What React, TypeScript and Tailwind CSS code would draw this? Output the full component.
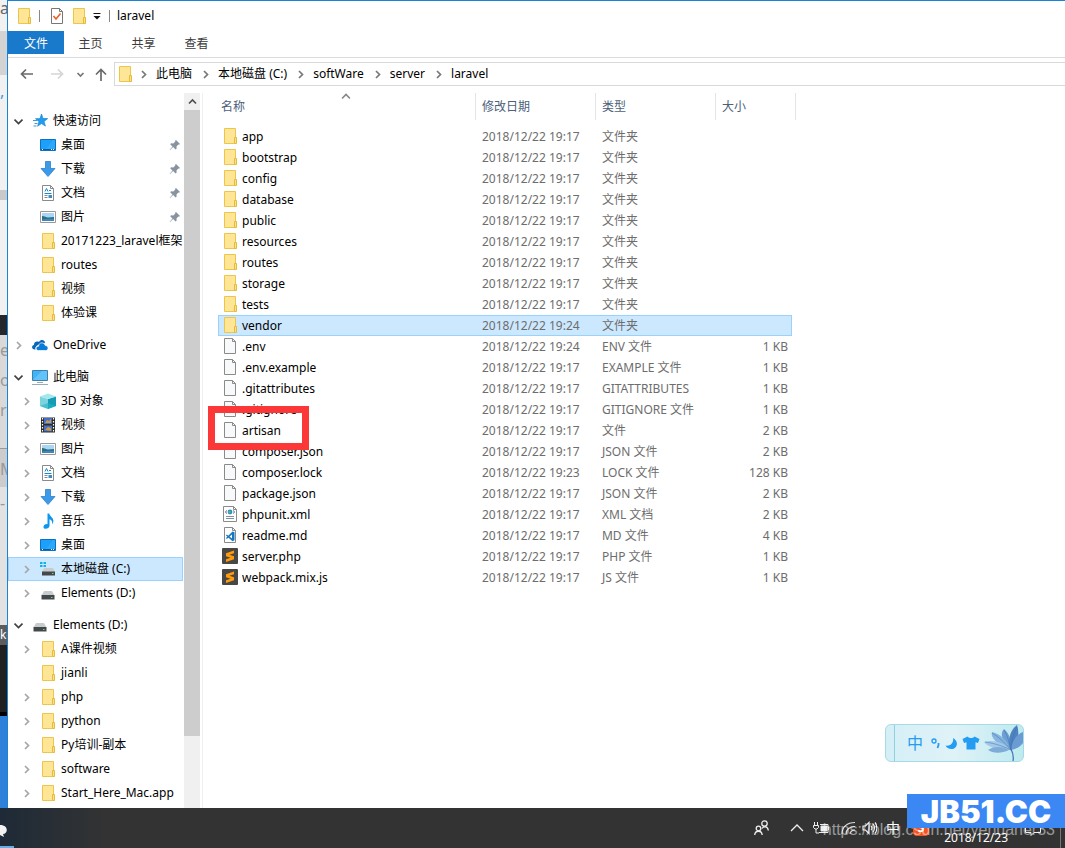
import type { ReactNode } from "react";
import { clsx } from "clsx";

type IconName =
  | "folder"
  | "star"
  | "desktop"
  | "download"
  | "document"
  | "picture"
  | "cloud"
  | "computer"
  | "cube"
  | "video"
  | "music"
  | "system"
  | "drive"
  | "file"
  | "xml"
  | "vscode"
  | "sublime";

type TreeItem = {
  label: string;
  icon: IconName;
  root?: boolean;
  open?: boolean;
  arrow?: boolean;
  pinned?: boolean;
  selected?: boolean;
};

const TREE: TreeItem[][] = [
  [
    { label: "快速访问", icon: "star", root: true, open: true, arrow: true },
    { label: "桌面", icon: "desktop", pinned: true },
    { label: "下载", icon: "download", pinned: true },
    { label: "文档", icon: "document", pinned: true },
    { label: "图片", icon: "picture", pinned: true },
    { label: "20171223_laravel框架", icon: "folder" },
    { label: "routes", icon: "folder" },
    { label: "视频", icon: "folder" },
    { label: "体验课", icon: "folder" },
  ],
  [{ label: "OneDrive", icon: "cloud", root: true, arrow: true }],
  [
    { label: "此电脑", icon: "computer", root: true, open: true, arrow: true },
    { label: "3D 对象", icon: "cube", arrow: true },
    { label: "视频", icon: "video", arrow: true },
    { label: "图片", icon: "picture", arrow: true },
    { label: "文档", icon: "document", arrow: true },
    { label: "下载", icon: "download", arrow: true },
    { label: "音乐", icon: "music", arrow: true },
    { label: "桌面", icon: "desktop", arrow: true },
    { label: "本地磁盘 (C:)", icon: "system", arrow: true, selected: true },
    { label: "Elements (D:)", icon: "drive", arrow: true },
  ],
  [
    { label: "Elements (D:)", icon: "drive", root: true, open: true, arrow: true },
    { label: "A课件视频", icon: "folder", arrow: true },
    { label: "jianli", icon: "folder" },
    { label: "php", icon: "folder", arrow: true },
    { label: "python", icon: "folder", arrow: true },
    { label: "Py培训-副本", icon: "folder", arrow: true },
    { label: "software", icon: "folder", arrow: true },
    { label: "Start_Here_Mac.app", icon: "folder", arrow: true },
  ],
];

type FileRow = { name: string; date?: string; type?: string; size?: string; icon?: IconName };

const FILES: FileRow[] = [
  { name: "app" },
  { name: "bootstrap" },
  { name: "config" },
  { name: "database" },
  { name: "public" },
  { name: "resources" },
  { name: "routes" },
  { name: "storage" },
  { name: "tests" },
  { name: "vendor", date: "2018/12/22 19:24" },
  { name: ".env", date: "2018/12/22 19:24", type: "ENV 文件", size: "1 KB", icon: "file" },
  { name: ".env.example", type: "EXAMPLE 文件", size: "1 KB", icon: "file" },
  { name: ".gitattributes", type: "GITATTRIBUTES", size: "1 KB", icon: "file" },
  { name: ".gitignore", type: "GITIGNORE 文件", size: "1 KB", icon: "file" },
  { name: "artisan", type: "文件", size: "2 KB", icon: "file" },
  { name: "composer.json", type: "JSON 文件", size: "2 KB", icon: "file" },
  { name: "composer.lock", date: "2018/12/22 19:23", type: "LOCK 文件", size: "128 KB", icon: "file" },
  { name: "package.json", type: "JSON 文件", size: "2 KB", icon: "file" },
  { name: "phpunit.xml", type: "XML 文档", size: "2 KB", icon: "xml" },
  { name: "readme.md", type: "MD 文件", size: "4 KB", icon: "vscode" },
  { name: "server.php", type: "PHP 文件", size: "1 KB", icon: "sublime" },
  { name: "webpack.mix.js", type: "JS 文件", size: "1 KB", icon: "sublime" },
];

const CRUMBS = ["此电脑", "本地磁盘 (C:)", "softWare", "server", "laravel"];

const MENU = ["主页", "共享", "查看"];

const PAGE = "M2.5.5h8l3 3v12h-11z";

const ICONS: Record<IconName, ReactNode> = {
  folder: (
    <>
      <path d="M2.5.5h11v15h-11z" fill="#ffe596" stroke="#ecc64a" />
      <path d="M12.5 9.5h2v6h-2z" fill="#ffe08a" stroke="#e5bb3c" />
    </>
  ),
  star: (
    <>
      <path d="M9.500 1l1.500 4.500 4.700.1-3.700 2.900 1.400 4.600-3.900-2.600-3.900 2.700 1.400-4.600L3.500 5.700l4.500-.1z" fill="#1e9df0" stroke="#1b86d2" strokeWidth=".7" />
      <path d="M1 7.500h4M2.500 10.500h3M1.500 13h3" stroke="#2b8dcc" strokeWidth=".9" />
    </>
  ),
  desktop: (
    <>
      <path d="M.5 2.500h15v11H.5z" fill="#1ba1fb" stroke="#0f6fc0" />
      <path d="M1 12.500h14" stroke="#0b5b9e" />
      <path d="M2 12.500h1M11 12.500h1M13 12.500h1" stroke="#fff" />
      <path d="M6 12L13 3h2v9z" fill="#38aefc" opacity=".6" />
    </>
  ),
  download: <path d="M5.500.5h5v7h4.500L8 15.500 1 7.500h4.500z" fill="#3c9ae8" stroke="#2a7fcb" strokeWidth=".8" />,
  document: (
    <>
      <path d={PAGE} fill="#fff" stroke="#8a8a8a" />
      <path d="M10.500.5v3h3" fill="none" stroke="#8a8a8a" />
      <path d="M5 6.500l1.500-3L8 6.500M9 5.500h2M4.500 8.500h7" stroke="#1a86d0" fill="none" />
      <path d="M4.500 10.500h3M4.500 12.500h3" stroke="#7d8b99" />
      <path d="M8.500 10h3.500v3H8.500z" fill="#3f8dbd" />
    </>
  ),
  picture: (
    <>
      <path d="M.5 2.500h15v11H.5z" fill="#fff" stroke="#9a9a9a" />
      <path d="M2 4h12v8H2z" fill="#a9d7f3" />
      <path d="M2 7c3 0 4 1.500 6 1.500s4-.5 6-.5v4H2z" fill="#2f6f80" />
      <path d="M2 10.500c4-1 8-1 12-.5v2H2z" fill="#3f86c0" />
    </>
  ),
  cloud: (
    <>
      <path d="M3.500 12.500C-.8 13-.8 8.500 2 8 2 4.500 5 4 7 5c2-3.500 6-2 6 1L6 8c-2 1-3 2.500-2.500 4.500z" fill="#0a64b8" />
      <path d="M6.500 13.500c-3.200 0-3.200-4.300 0-4.300.2-4.300 6-4.300 6.800-.7 3.700 0 3.500 5 .4 5z" fill="#0b7bd8" stroke="#fff" strokeWidth=".7" />
    </>
  ),
  computer: (
    <>
      <path d="M.5 1.500h15v10H.5z" fill="#3fb4f8" stroke="#3f7fa8" />
      <path d="M1 11L10 2h5v9z" fill="#7bcdfa" opacity=".6" />
      <path d="M5 13.500h6M0 15.500h16" stroke="#9aaab8" />
    </>
  ),
  cube: (
    <>
      <path d="M0 3.500L8 6v10l-8-3z" fill="#7ad3dd" />
      <path d="M16 3.500L8 6v10l8-3z" fill="#149cb5" />
      <path d="M0 3.500L8 .5l8 3L8 6z" fill="#a6e7ee" />
      <path d="M0 13l8-3 8 3-8 3z" fill="#1fb4c8" opacity=".6" />
    </>
  ),
  video: (
    <>
      <path d="M1 .5h14v15H1z" fill="#2c2c2c" />
      <path d="M4 1h8v6H4z" fill="#4270cc" />
      <path d="M4 8.500h8v6H4z" fill="#4270cc" />
      <path d="M5 6l2-3 2 1 2-2v4zM5 13l3-3 3 1v3z" fill="#d59a2f" />
      <path d="M2.500 1v14M13.500 1v14" stroke="#fff" strokeWidth="1.200" strokeDasharray="1.500 1.500" />
    </>
  ),
  music: (
    <path d="M7.500.5h1.800c.2 3 4.700 4 4 8.200-.2 1.300-1 2.300-1.300 2.500.8-3-.7-4.400-2.500-5v6.500c0 3-5.500 4.200-6 1.500-.3-2.200 2.400-3.500 4-3z" fill="#0e95ef" />
  ),
  system: (
    <>
      <path d="M0 1h2.500v2H0zM3.500 1H6v2H3.500zM0 4h2.500v2H0zM3.500 4H6v2H3.500z" fill="#14b1e8" />
      <path d="M4 7h9l2 4H2z" fill="#c9ccce" />
      <path d="M2 10.500h13v4H2z" fill="#45484b" />
      <path d="M12 12.500h1.500" stroke="#55e06b" />
    </>
  ),
  drive: (
    <>
      <path d="M4 6h8l2.500 4.500h-13z" fill="#c9ccce" />
      <path d="M1.500 10h13v4.500h-13z" fill="#45484b" />
      <path d="M11 12.500h1.500" stroke="#55e06b" />
    </>
  ),
  file: (
    <>
      <path d={PAGE} fill="#f8f9fa" stroke="#8a8a8a" />
      <path d="M10.500.5v3h3" fill="none" stroke="#8a8a8a" />
    </>
  ),
  xml: (
    <>
      <path d="M1.500.5h10l3 3v12h-13z" fill="#fff" stroke="#8a8a8a" />
      <path d="M11.500.5v3h3" fill="none" stroke="#8a8a8a" />
      <circle cx="8" cy="6" r="2.400" fill="#2f8fc4" />
      <circle cx="7.500" cy="6" r="1" fill="#74c05c" />
      <path d="M5 4.500L3.300 6 5 7.500M11 4.500L12.700 6 11 7.500" fill="none" stroke="#3a4f8f" strokeWidth=".9" />
      <path d="M4 10.500h8M4 12.500h8" stroke="#7f8fa8" />
    </>
  ),
  vscode: (
    <>
      <path d={PAGE} fill="#fff" stroke="#8a8a8a" />
      <path d="M10.500.5v3h3" fill="none" stroke="#8a8a8a" />
      <path d="M10.500 4.500l2 .8v8l-2 .9L4 8.500l.8-1 5.200 4V7.500L4.800 12 4 11z" fill="#1178c8" />
    </>
  ),
  sublime: (
    <>
      <rect width="16" height="16" rx="1" fill="#474747" />
      <path d="M12 2.500v2.800L7.500 6.800 12 8.200v3L4 14v-2.800l4.500-1.500L4 8.200v-3z" fill="#ff9a0a" />
    </>
  ),
};

function Icon({ name }: { name: IconName }) {
  return (
    <svg width="16" height="16" viewBox="0 0 16 16" className="shrink-0" aria-hidden>
      {ICONS[name]}
    </svg>
  );
}

function Chevron({ className, d = "M3 1l3.500 3.500L3 8" }: { className?: string; d?: string }) {
  return (
    <svg width="9" height="9" viewBox="0 0 9 9" fill="none" className={clsx("shrink-0", className)} aria-hidden>
      <path d={d} stroke="currentColor" strokeWidth="1.700" />
    </svg>
  );
}

function PinIcon() {
  return (
    <svg width="12" height="12" viewBox="0 0 12 12" className="shrink-0" aria-hidden>
      <path d="M7 1l4 4-1 .8-.7-.2-1.800 2 .1 2.200-1 .8-2.500-2.500L1 11l-.3-.3L3.500 7.500 1.200 5.200l.9-.9 2.200.1 2-1.800-.2-.8z" fill="#87949f" />
    </svg>
  );
}

function BackIcon() {
  return (
    <svg width="14" height="12" viewBox="0 0 14 12" fill="none" aria-hidden>
      <path d="M13 6H2M6 1.500L1.500 6 6 10.500" stroke="currentColor" strokeWidth="1.700" />
    </svg>
  );
}

function ForwardIcon() {
  return (
    <svg width="14" height="12" viewBox="0 0 14 12" fill="none" aria-hidden>
      <path d="M1 6h11M8 1.500L12.500 6 8 10.500" stroke="currentColor" strokeWidth="1.700" />
    </svg>
  );
}

function UpIcon() {
  return (
    <svg width="12" height="13" viewBox="0 0 12 13" fill="none" aria-hidden>
      <path d="M6 13V2M1 6.500l5-5 5 5" stroke="currentColor" strokeWidth="1.700" />
    </svg>
  );
}

function TitleBar() {
  return (
    <div className="flex h-[30px] shrink-0 items-center pl-2">
      <Icon name="folder" />
      <span className="ml-[7px] h-3 w-px bg-[#888]" />
      <button className="ml-[9px]" aria-label="属性">
        <svg width="16" height="16" viewBox="0 0 16 16" fill="none" aria-hidden>
          <path d={PAGE} fill="#fff" stroke="#777" />
          <path d="M10.500.5v3h3" stroke="#777" />
          <path d="M4.500 8l2.500 3 4.500-5.500" stroke="#e8622c" strokeWidth="1.600" />
        </svg>
      </button>
      <button className="ml-[6px]" aria-label="新建文件夹">
        <Icon name="folder" />
      </button>
      <button className="ml-[6px]" aria-label="自定义快速访问工具栏">
        <svg width="8" height="8" viewBox="0 0 8 8" aria-hidden>
          <path d="M.5 1h7v1h-7zM.5 4h7L4 7.500z" fill="#111" />
        </svg>
      </button>
      <span className="ml-2 h-3 w-px bg-[#888]" />
      <h1 className="ml-[7px]">laravel</h1>
    </div>
  );
}

function AddressBar() {
  return (
    <div className="mb-[3px] flex h-8 shrink-0 items-center pl-3">
      <button className="text-[#6a6a6a]" aria-label="返回"><BackIcon /></button>
      <button className="ml-4 text-[#d5d5d5]" aria-label="前进"><ForwardIcon /></button>
      <button className="ml-3 text-[#777]" aria-label="最近浏览的位置">
        <Chevron d="M1.500 3l3 3 3-3" />
      </button>
      <button className="ml-[10px] text-[#6a6a6a]" aria-label="上移"><UpIcon /></button>
      <nav className="ml-[7px] flex h-6 flex-1 items-center border border-r-0 border-[#d9d9d9] pl-[2px]">
        <Icon name="folder" />
        {CRUMBS.map((crumb) => (
          <span key={crumb} className="flex items-center">
            <Chevron className="ml-[6px] mr-2 text-[#777]" />
            <a href="#" className="mr-[3px]">{crumb}</a>
          </span>
        ))}
      </nav>
    </div>
  );
}

function TreeRow({ item }: { item: TreeItem }) {
  return (
    <li
      className={clsx(
        "flex h-6 items-center border",
        item.root ? "pl-px" : "pl-[9px]",
        item.selected ? "border-[#99d1ff] bg-[#cce8ff]" : "border-transparent"
      )}
    >
      <span className="flex w-4 shrink-0 justify-center">
        {item.arrow && (
          <Chevron
            className={item.open ? "text-[#404040]" : "text-[#a6a6a6]"}
            d={item.open ? "M.5 2.500l4 4 4-4" : undefined}
          />
        )}
      </span>
      <span className="ml-[6px] mr-[5px]"><Icon name={item.icon} /></span>
      <span className="flex-1 whitespace-nowrap">{item.label}</span>
      {item.pinned && <span className="mr-px"><PinIcon /></span>}
    </li>
  );
}

function Sidebar() {
  return (
    <aside className="flex shrink-0 border-r border-[#f0f0f0] pr-[2px]">
      <div className="w-[176px] space-y-2 overflow-hidden pr-px pt-4">
        {TREE.map((group) => (
          <ul key={group[0].label}>
            {group.map((item) => (
              <TreeRow key={item.label} item={item} />
            ))}
          </ul>
        ))}
      </div>
      <div className="flex w-4 flex-col bg-[#f0f0f0]">
        <button className="flex h-[17px] items-center justify-center text-[#505050]" aria-label="向上滚动">
          <Chevron d="M1 6.500L4.500 3 8 6.500" />
        </button>
        <div className="h-7/8 bg-[#cdcdcd]" />
      </div>
    </aside>
  );
}

function FileList() {
  const heading = "h-[33px] p-0 align-top text-left font-normal text-[#4c607a]";
  const cell = "h-[27px] border-r border-[#e5e5e5] flex items-center";
  return (
    <main className="relative min-w-0 flex-1 overflow-hidden pl-[15px]">
      <table className="w-[578px] table-fixed border-separate border-spacing-0">
        <colgroup>
          <col />
          <col className="w-[120px]" />
          <col className="w-[120px]" />
          <col className="w-[76px]" />
          <col className="w-1" />
        </colgroup>
        <thead>
          <tr>
            <th className={heading}>
              <div className={clsx(cell, "relative pl-[3px]")}>
                名称
                <Chevron className="absolute left-1/2 top-0 -translate-x-1/2 text-[#888]" d="M.5 5.500l4-4 4 4" />
              </div>
            </th>
            <th className={heading}><div className={clsx(cell, "pl-[6px]")}>修改日期</div></th>
            <th className={heading}><div className={clsx(cell, "pl-[6px]")}>类型</div></th>
            <th className={heading} colSpan={2}><div className={clsx(cell, "pl-[6px]")}>大小</div></th>
          </tr>
        </thead>
        <tbody>
          {FILES.map((file) => {
            const tone = file.name === "vendor" ? "border-[#99d1ff] bg-[#cce8ff]" : "border-transparent";
            const td = clsx("h-[21px] border-y p-0 pl-[6px] text-[#6d6d6d] whitespace-nowrap", tone);
            return (
              <tr key={file.name}>
                <td className={clsx("h-[21px] border-y border-l p-0 pl-[3px]", tone)}>
                  <div className="flex h-[19px] items-center gap-1">
                    <span className="pb-px"><Icon name={file.icon ?? "folder"} /></span>
                    <span className="leading-[19px]">{file.name}</span>
                  </div>
                </td>
                <td className={td}>{file.date ?? "2018/12/22 19:17"}</td>
                <td className={td}>{file.type ?? "文件夹"}</td>
                <td className={clsx(td, "border-r pr-[3px] text-right")}>{file.size}</td>
                <td className="p-0" />
              </tr>
            );
          })}
        </tbody>
      </table>
      {/* Red frame round artisan */}
      <div className="absolute left-[5px] top-[313px] h-[44px] w-[101px] border-[7px] border-[#fb3737]" />
    </main>
  );
}

// Sliver of the windows that lie behind the explorer
function Backdrop() {
  return (
    <div className="flex w-[7px] shrink-0 flex-col overflow-hidden bg-[#f1f1f1] text-base leading-4 text-[#999]">
      <div className="h-[31px] text-[#666]">ar</div>
      <div className="h-[44px] bg-[#d3d3d3]" />
      <div className="h-[115px] pt-2 text-[#3d9bd8]">,</div>
      <div className="h-[10px] bg-[#c9c9c9]" />
      <div className="h-[115px]" />
      <div className="h-5 bg-[#24282d]" />
      <div className="h-[113px] bg-[#d9d9d9] leading-[30px]">e<br />o<br />rc</div>
      <div className="h-[39px] border-t border-[#999] bg-[#cccccc] pt-3">M</div>
      <div className="h-[138px] bg-[#e2e2e2] pt-2">-</div>
      <div className="h-5 bg-[#5c5c5c] text-xs leading-5 text-white">kc</div>
      <div className="h-[71px] border-b-4 border-black bg-[#202020]" />
      <div className="flex-1 bg-[#2f80d9]" />
    </div>
  );
}

function InputBar() {
  return (
    <div className="absolute bottom-[86px] right-[41px] flex h-[38px] w-[139px] items-center overflow-hidden rounded-md border border-[#a5dbe4] bg-linear-to-r from-[#d5eff6] via-[#dff2f7] to-[#bdeaf0] text-[#249cf2]">
      <span className="h-full w-[9px] border-r border-[#8fd0dc]" />
      <button className="ml-3 text-base leading-5">中</button>
      <button className="ml-2" aria-label="标点">
        <svg width="10" height="12" viewBox="0 0 10 12" fill="none" aria-hidden>
          <circle cx="3" cy="4" r="2" stroke="currentColor" strokeWidth="1.400" />
          <path d="M7.500 6v2l-1 3" stroke="currentColor" strokeWidth="1.800" />
        </svg>
      </button>
      <button className="ml-1" aria-label="夜间">
        <svg width="13" height="13" viewBox="0 0 13 13" aria-hidden>
          <path d="M8 1c7 4 3.500 11-1.500 11C3.500 12 1.500 10.500.5 8.500 5 9.500 9 6 8 1z" fill="currentColor" />
        </svg>
      </button>
      <button className="ml-1" aria-label="皮肤">
        <svg width="18" height="14" viewBox="0 0 18 14" aria-hidden>
          <path d="M5.500.5c2 2 5 2 7 0L17.500 3l-1.500 4-2.500-.8V13.500h-9V6.200L2 7 .5 3z" fill="currentColor" />
        </svg>
      </button>
      <svg width="40" height="36" viewBox="0 0 40 36" className="ml-auto shrink-0" aria-hidden>
        <path d="M28 25C20 17 16 9 21 4c6 5 8 13 7 21z" fill="#6d9fd3" />
        <path d="M27 25C14 20 7 12 9 7c9 2 16 9 18 18z" fill="#85b5df" />
        <path d="M27 25C16 26 5 22 1 17c10-3 21 1 26 8z" fill="#a3c9e9" />
        <path d="M26 25c-8 4-17 3-21 0 5-4 15-4 21 0z" fill="#7eacd8" />
        <path d="M28 25c-4-9-1-20 6-25 3 9 1 19-6 25z" fill="#4f83c0" />
        <path d="M28 25c1-9 6-16 12-18v11c-3 4-7 6-12 7z" fill="#6b9bd2" />
        <path d="M28 25C26 18 25 11 21 5M28 25C22 18 16 12 9 8M28 25C18 20 9 18 2 17M28 25c0-9 3-17 6-23" stroke="#3d6fae" strokeWidth=".5" fill="none" />
        <path d="M28 24c2 4 3 7 2 12" stroke="#4277b5" strokeWidth="1.300" fill="none" />
      </svg>
    </div>
  );
}

function Taskbar() {
  return (
    <footer className="relative flex h-10 shrink-0 items-center overflow-hidden bg-linear-to-r from-[#1e2a37] via-[#333] via-10% to-[#333] text-white">
      <span className="flex h-full w-[14px] items-center border-b-2 border-[#65aee8] pt-2">
        <svg width="7" height="14" viewBox="0 0 7 14" aria-hidden>
          <path d="M0 1c9 0 8 9 3 9l1 3-4-2z" fill="#f2f2f2" />
        </svg>
      </span>
      <div className="ml-auto flex items-center pr-[165px]">
        <svg width="15" height="16" viewBox="0 0 15 16" fill="none" stroke="#eee" strokeWidth="1.300" aria-hidden>
          <circle cx="10.500" cy="3.500" r="2.700" />
          <circle cx="4.500" cy="8.500" r="2.300" />
          <path d="M.7 15c.5-5 7-5 7.500 0M8 8.500c2-3 6-2 6.300 2" />
        </svg>
        <svg width="14" height="8" viewBox="0 0 14 8" fill="none" stroke="#eee" strokeWidth="1.300" className="ml-[21px]" aria-hidden>
          <path d="M1 7l6-6 6 6" />
        </svg>
        <svg width="17" height="14" viewBox="0 0 17 14" fill="none" stroke="#eee" className="ml-[9px]" aria-hidden>
          <path d="M1.500 1v3M4.500 1v3M.5 4.500h5v2l-1.500 1.500H2L.5 6.500zM3 8v4h3" />
          <path d="M7 3.500h8v8H6M15.500 6v3" />
          <path d="M8 5h6v5H8z" fill="#eee" />
        </svg>
        <svg width="15" height="14" viewBox="0 0 15 14" fill="none" stroke="#ddd" strokeWidth="1.200" className="ml-[11px]" aria-hidden>
          <path d="M1 13C1 6 6 1.500 14 1.500M5 13c0-4 3-7.500 9-7.500M9 13c0-2 2-4 5-4" />
        </svg>
        <svg width="15" height="14" viewBox="0 0 15 14" fill="none" stroke="#eee" strokeWidth="1.200" className="ml-[6px]" aria-hidden>
          <path d="M1 5h2.500L7 1.500v11L3.500 9H1zM9 5c1 1 1 3 0 4M11 3c2 2 2 6 0 8M13 1.500c2.500 3 2.500 8 0 11" />
        </svg>
        <span className="ml-[9px] text-sm">中</span>
      </div>
      <span className="absolute bottom-3 right-[136px] flex h-4 w-4 items-center justify-center rounded bg-[#f4511e] font-bold">S</span>
      <span className="absolute bottom-[2px] right-[57px] leading-4">2018/12/23</span>
      <svg width="16" height="14" viewBox="0 0 16 14" fill="none" stroke="#eee" className="absolute bottom-3 right-6" aria-hidden>
        <path d="M.5.5h15v10H9l-3 3v-3H.5z" />
      </svg>
      <span className="absolute bottom-0 right-1 h-10 w-px bg-[#777]" />
      <span className="absolute bottom-2 right-[10px] font-['Liberation_Sans',sans-serif] text-base leading-5 text-white/50">
        https://blog.csdn.net/yehuaner33
      </span>
    </footer>
  );
}

export default function App() {
  return (
    <div className="relative flex h-screen flex-col overflow-hidden font-['Noto_Sans','Noto_Sans_CJK_SC',sans-serif] text-xs text-black">
      <div className="flex min-h-0 flex-1">
        <Backdrop />
        <div className="flex min-w-0 flex-1 flex-col border-l border-t border-[#1883d7] bg-white">
          <TitleBar />
          <div className="flex h-[27px] shrink-0 items-start border-b border-[#dadbdc] text-[#3c3c3c]">
            <button className="h-[23px] w-14 bg-[#1979ca] pt-[2px] text-white">文件</button>
            {MENU.map((item) => (
              <button key={item} className="h-[23px] w-[53px] pt-[2px]">{item}</button>
            ))}
          </div>
          <AddressBar />
          <div className="flex min-h-0 flex-1">
            <Sidebar />
            <FileList />
          </div>
        </div>
      </div>
      <Taskbar />
      <InputBar />
      <div className="absolute bottom-5 right-0 flex h-[34px] w-[158px] items-center justify-center bg-[#3b88f5] pt-px font-['Inter',sans-serif] text-[31px] font-black text-white">
        JB51.CC
      </div>
    </div>
  );
}
